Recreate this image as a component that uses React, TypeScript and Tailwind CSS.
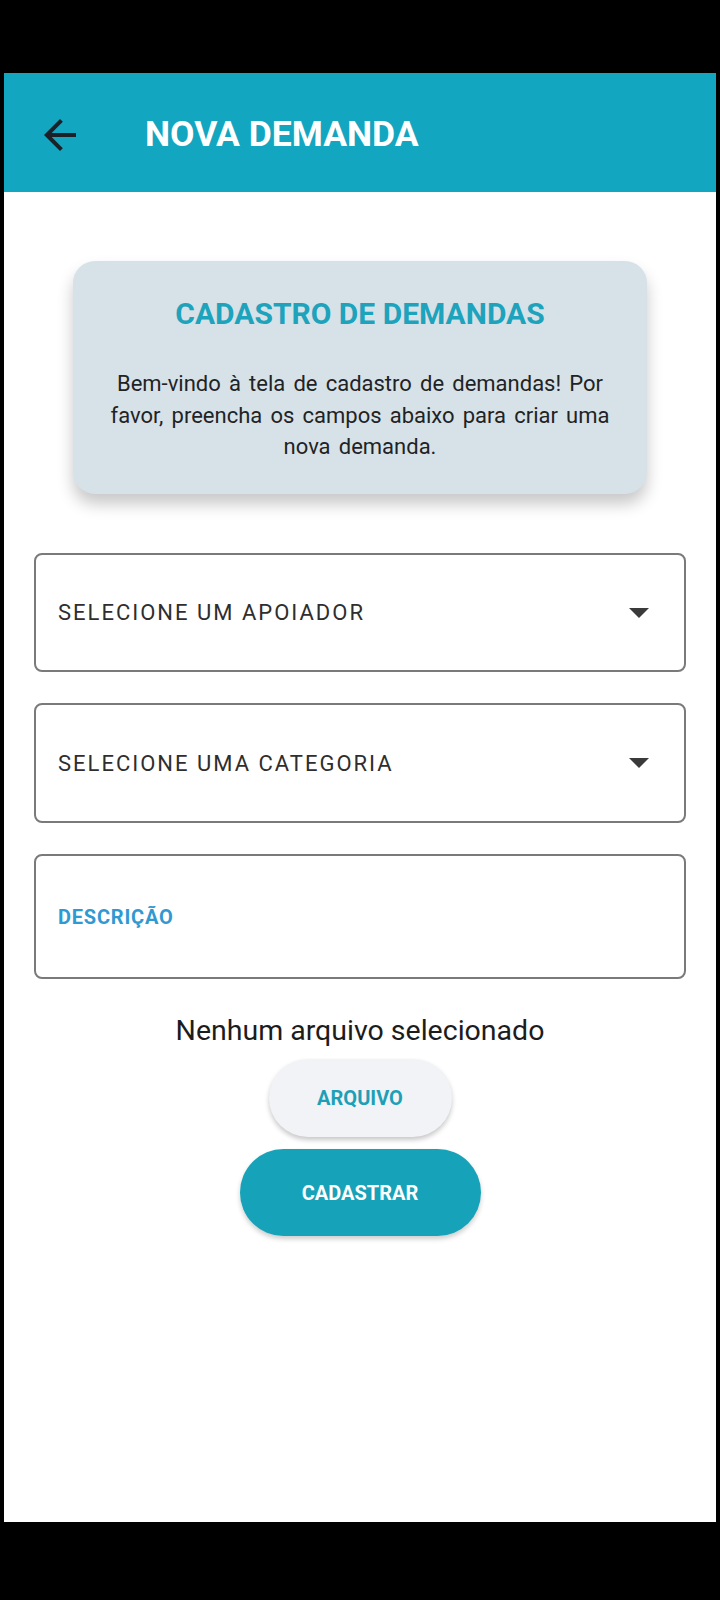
import React from "react";

export default function App() {
  return (
    <div className="w-[720px] h-[1600px] bg-black flex flex-col" style={{ fontFamily: "Roboto, 'Noto Sans', sans-serif" }}>
      <div className="h-[73px] shrink-0" />
      <div className="mx-[4px] h-[1449px] bg-white flex flex-col">
        <div className="h-[119px] bg-[#13a6c0] flex items-center shrink-0 pt-[5px]">
          <div className="w-[141px] pl-[32px] flex items-center">
            <svg width="48" height="48" viewBox="0 0 24 24">
              <path d="M20 11H7.83l5.59-5.59L12 4l-8 8 8 8 1.41-1.41L7.83 13H20v-2z" fill="#1b2127" />
            </svg>
          </div>
          <div className="text-white text-[35.5px] font-bold leading-none">NOVA DEMANDA</div>
        </div>

        <div className="flex flex-col items-center">
          <div className="mt-[69px] w-[574px] h-[233px] rounded-[22px] bg-[#d6e2e7] shadow-[0_10px_16px_rgba(0,0,0,0.22)] flex flex-col items-center pt-[35px] px-[26px]">
            <div className="text-[#1ea3bc] text-[30px] font-bold leading-[36px] whitespace-nowrap">CADASTRO DE DEMANDAS</div>
            <div className="mt-[36px] text-[#1f2326] text-[22px] leading-[31.5px] text-center [word-spacing:2.7px]">
              Bem-vindo à tela de cadastro de demandas! Por favor, preencha os campos abaixo para criar uma nova demanda.
            </div>
          </div>

          <div className="mt-[59px] w-[652px] flex flex-col gap-[31px]">
            <div className="h-[119px] border-2 border-[#7a7a7a] rounded-[8px] flex items-center justify-between pl-[22px] pr-[35px]">
              <span className="text-[22px] text-[#2e2e2e] tracking-[2px]">SELECIONE UM APOIADOR</span>
              <svg width="20" height="10" viewBox="0 0 20 10"><path d="M0 0h20L10 10z" fill="#3a3a3a" /></svg>
            </div>
            <div className="h-[120px] border-2 border-[#7a7a7a] rounded-[8px] flex items-center justify-between pl-[22px] pr-[35px]">
              <span className="text-[22px] text-[#2e2e2e] tracking-[2px]">SELECIONE UMA CATEGORIA</span>
              <svg width="20" height="10" viewBox="0 0 20 10"><path d="M0 0h20L10 10z" fill="#3a3a3a" /></svg>
            </div>
            <div className="h-[125px] border-2 border-[#7a7a7a] rounded-[8px] flex items-center pl-[22px]">
              <span className="text-[20px] font-bold text-[#2f9ad2] tracking-[0.8px]">DESCRIÇÃO</span>
            </div>
          </div>

          <div className="mt-[33px] text-[28.5px] text-[#1c1c1c] leading-[38px]">Nenhum arquivo selecionado</div>
          <div className="mt-[9px] w-[183px] h-[78px] rounded-full bg-[#f1f3f6] shadow-[0_3px_5px_rgba(0,0,0,0.22)] flex items-center justify-center">
            <span className="text-[#1e9fb6] text-[20px] font-bold">ARQUIVO</span>
          </div>
          <div className="mt-[12px] w-[241px] h-[87px] rounded-full bg-[#16a2b8] shadow-[0_3px_5px_rgba(0,0,0,0.2)] flex items-center justify-center">
            <span className="text-white text-[20px] font-bold">CADASTRAR</span>
          </div>
        </div>
      </div>
    </div>
  );
}
